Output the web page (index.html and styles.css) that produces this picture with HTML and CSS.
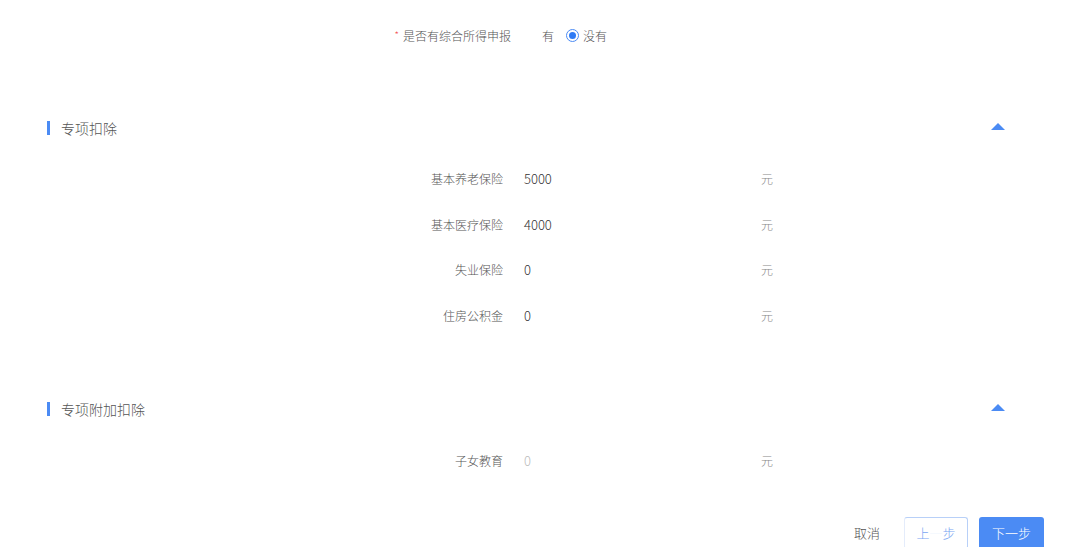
FILE: index.html
```html
<!DOCTYPE html>
<html lang="zh">
<head>
<meta charset="utf-8">
<link rel="stylesheet" href="styles.css">
</head>
<body>
<div class="page">
  <div class="top-row">
    <div class="top-label"><span class="req">*</span>是否有综合所得申报</div>
    <div class="radios">
      <span class="opt">有</span>
      <span class="opt checked"><span class="radio"><span class="dot"></span></span>没有</span>
    </div>
  </div>

  <div class="section-head first">
    <div class="title"><span class="bar"></span>专项扣除</div>
    <span class="caret"></span>
  </div>
  <div class="rows">
    <div class="row"><div class="label">基本养老保险</div><div class="value">5000</div><div class="unit">元</div></div>
    <div class="row"><div class="label">基本医疗保险</div><div class="value">4000</div><div class="unit">元</div></div>
    <div class="row"><div class="label">失业保险</div><div class="value">0</div><div class="unit">元</div></div>
    <div class="row"><div class="label">住房公积金</div><div class="value">0</div><div class="unit">元</div></div>
  </div>

  <div class="section-head second">
    <div class="title"><span class="bar"></span>专项附加扣除</div>
    <span class="caret"></span>
  </div>
  <div class="rows second-rows">
    <div class="row"><div class="label">子女教育</div><div class="value placeholder">0</div><div class="unit">元</div></div>
  </div>

  <div class="footer">
    <span class="cancel">取消</span>
    <span class="btn ghost">上<span class="faint">一</span>步</span>
    <span class="btn primary">下一步</span>
  </div>
</div>
</body>
</html>
```
FILE: styles.css
```css
* { box-sizing: border-box; }
html, body { margin: 0; padding: 0; background: #fff; }
body {
  font-family: "Noto Sans CJK SC", "Noto Sans", sans-serif;
  font-weight: 300;
  color: #555;
  width: 1080px;
  height: 547px;
  overflow: hidden;
}
.page { width: 1080px; }

.top-row {
  margin-top: 19px;
  height: 32px;
  display: flex;
  align-items: center;
}
.top-label {
  width: 511px;
  text-align: right;
  font-size: 12px;
  color: #555;
}
.req { color: #f24b4b; font-size: 10px; margin-right: 4px; position: relative; top: -2px; }
.radios { display: flex; align-items: center; margin-left: 31px; font-size: 12px; color: #555; }
.opt { display: inline-flex; align-items: center; }
.opt.checked { margin-left: 12px; }
.radio {
  width: 13px; height: 13px;
  border: 1px solid #4b8bf4;
  border-radius: 50%;
  display: inline-flex;
  align-items: center;
  justify-content: center;
  margin-right: 4px;
}
.dot { width: 7px; height: 7px; border-radius: 50%; background: #2f7bf5; }

.section-head {
  height: 40px;
  display: flex;
  align-items: center;
  justify-content: space-between;
  padding: 0 75px 0 47px;
}
.section-head.first { margin-top: 57px; }
.section-head.second { margin-top: 51px; }
.title { display: flex; align-items: center; font-size: 14px; color: #555; }
.bar { width: 3px; height: 14px; background: #4b8bf4; margin-right: 11px; }
.caret {
  width: 0; height: 0;
  border-left: 7px solid transparent;
  border-right: 7px solid transparent;
  border-bottom: 7px solid #4b8bf4;
  margin-top: -4px;
}

.rows { margin-top: 8px; }
.rows.second-rows { margin-top: 9px; }
.row {
  height: 45.5px;
  display: flex;
  align-items: center;
}
.label {
  width: 503px;
  text-align: right;
  font-size: 12px;
  color: #555;
}
.value {
  width: 237px;
  margin-left: 21px;
  font-size: 13px;
  color: #333;
}
.value.placeholder { color: #bbb; }
.unit { font-size: 12px; color: #888; }

.footer {
  margin-top: 33px;
  display: flex;
  align-items: center;
  justify-content: flex-end;
  padding-right: 36px;
  height: 32px;
}
.cancel { font-size: 13px; color: #555; margin-right: 24px; }
.btn {
  height: 32px;
  display: inline-flex;
  align-items: center;
  justify-content: center;
  font-size: 13px;
  border-radius: 3px;
}
.btn.ghost {
  width: 64px;
  border: 1px solid #b8d0f8;
  border-left-color: #e4ecfb;
  border-bottom-color: #fff;
  color: #7aa6f2;
}
.faint { color: #f4f8fe; }
.btn.primary {
  width: 65px;
  margin-left: 11px;
  background: #4b8bf4;
  color: #fff;
}
```
